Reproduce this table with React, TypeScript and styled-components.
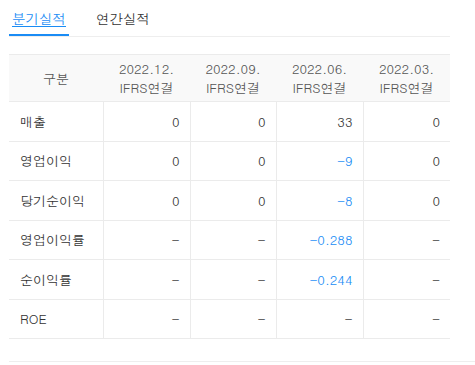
import React from 'react';
import styled, { createGlobalStyle } from 'styled-components';

const GlobalStyle = createGlobalStyle`
  html, body {
    margin: 0;
    padding: 0;
    background: #fff;
  }
  body {
    font-family: Dotum, "Noto Sans CJK KR", "Noto Sans", sans-serif;
    color: #333;
  }
`;

interface Row {
  label: string;
  values: string[];
}

const periods = ['2022.12.', '2022.09.', '2022.06.', '2022.03.'];

const rows: Row[] = [
  { label: '매출', values: ['0', '0', '33', '0'] },
  { label: '영업이익', values: ['0', '0', '-9', '0'] },
  { label: '당기순이익', values: ['0', '0', '-8', '0'] },
  { label: '영업이익률', values: ['-', '-', '-0.288', '-'] },
  { label: '순이익률', values: ['-', '-', '-0.244', '-'] },
  { label: 'ROE', values: ['-', '-', '-', '-'] },
];

const Wrap = styled.div`
  padding-left: 9px;
  width: 466px;
`;

const Tabs = styled.div`
  display: flex;
  gap: 24px;
  width: 441px;
  height: 36px;
  border-bottom: 1px solid #eeeeee;
`;

const Tab = styled.div<{ $active?: boolean }>`
  padding: 11px 3px 0;
  height: 23px;
  font-size: 13.5px;
  line-height: 16px;
  color: ${(p) => (p.$active ? '#1a8cf5' : '#333')};
  text-decoration: ${(p) => (p.$active ? 'underline' : 'none')};
  text-underline-offset: 2px;
  border-bottom: 2px solid ${(p) => (p.$active ? '#1a8cf5' : 'transparent')};
  margin-bottom: -1px;
`;

const Table = styled.table`
  margin-top: 17px;
  width: 441px;
  border-collapse: collapse;
  table-layout: fixed;
  font-size: 13px;
  border-top: 1px solid #ebebeb;
`;

const HeadCell = styled.th`
  background: #f9f9f9;
  color: #555;
  font-weight: normal;
  text-align: center;
  height: 46px;
  padding: 0;
  line-height: 19px;
  border-bottom: 1px solid #ebebeb;
`;

const LabelCell = styled.td`
  height: 38.5px;
  padding: 0 0 0 11px;
  color: #333;
  border-bottom: 1px solid #ebebeb;
  border-right: 1px solid #ebebeb;
`;

const ValueCell = styled.td<{ $neg?: boolean; $last?: boolean }>`
  height: 38.5px;
  padding: 0 10px 0 0;
  text-align: right;
  color: ${(p) => (p.$neg ? '#1a8cf5' : '#333')};
  border-bottom: 1px solid #ebebeb;
  border-right: ${(p) => (p.$last ? 'none' : '1px solid #ebebeb')};
`;

const Footer = styled.div`
  margin-top: 22px;
  border-top: 1px solid #eeeeee;
`;

export default function App() {
  return (
    <Wrap>
      <GlobalStyle />
      <Tabs>
        <Tab $active>분기실적</Tab>
        <Tab>연간실적</Tab>
      </Tabs>
      <Table>
        <colgroup>
          <col style={{ width: 94 }} />
          <col style={{ width: 87 }} />
          <col style={{ width: 86 }} />
          <col style={{ width: 87 }} />
          <col style={{ width: 87 }} />
        </colgroup>
        <thead>
          <tr>
            <HeadCell>구분</HeadCell>
            {periods.map((p) => (
              <HeadCell key={p}>
                {p}
                <br />
                IFRS연결
              </HeadCell>
            ))}
          </tr>
        </thead>
        <tbody>
          {rows.map((r) => (
            <tr key={r.label}>
              <LabelCell>{r.label}</LabelCell>
              {r.values.map((v, i) => (
                <ValueCell key={i} $neg={v.startsWith('-') && v.length > 1} $last={i === r.values.length - 1}>
                  {v}
                </ValueCell>
              ))}
            </tr>
          ))}
        </tbody>
      </Table>
      <Footer />
    </Wrap>
  );
}
